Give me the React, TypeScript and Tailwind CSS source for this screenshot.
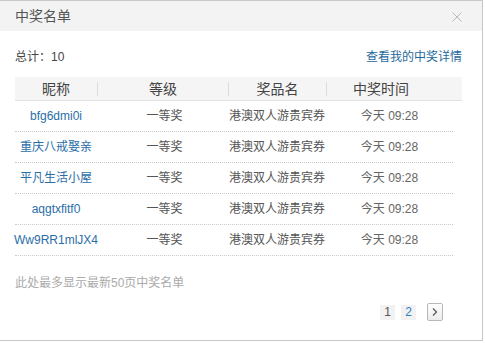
import React from "react";

type Winner = {
  name: string;
  level: string;
  prize: string;
  time: string;
};

const winners: Winner[] = [
  { name: "bfg6dmi0i", level: "一等奖", prize: "港澳双人游贵宾券", time: "今天 09:28" },
  { name: "重庆八戒娶亲", level: "一等奖", prize: "港澳双人游贵宾券", time: "今天 09:28" },
  { name: "平凡生活小屋", level: "一等奖", prize: "港澳双人游贵宾券", time: "今天 09:28" },
  { name: "aqgtxfitf0", level: "一等奖", prize: "港澳双人游贵宾券", time: "今天 09:28" },
  { name: "Ww9RR1mlJX4", level: "一等奖", prize: "港澳双人游贵宾券", time: "今天 09:28" },
];

const font = "font-['Liberation_Sans','Noto_Sans_CJK_SC',sans-serif]";

const Divider = () => <div className="h-[14px] w-px bg-[#dcdcdc]" />;

const App = () => {
  return (
    <div className={`w-[485px] h-[343px] bg-white ${font}`}>
      <div className="w-[483px] h-[341px] border-t border-r border-b border-[#c8c8c8] flex flex-col">
        {/* title bar */}
        <div className="h-[30px] bg-[#f3f3f3] flex items-center justify-between pl-[15px] pr-[20px]">
          <span className="text-[14px] leading-[16px] text-[#555]">中奖名单</span>
          <svg width="10" height="10" viewBox="0 0 10 10" className="mt-[1px]">
            <path d="M0.5 0.5 L9.5 9.5 M9.5 0.5 L0.5 9.5" stroke="#b8b8b8" strokeWidth="1" fill="none" />
          </svg>
        </div>

        <div className="px-[15px] flex flex-col">
          <div className="mt-[18px] h-[16px] flex items-center justify-between pr-[5px] text-[12px] leading-[16px]">
            <span className="text-[#444]">总计：10</span>
            <span className="text-[#1f6a9c]">查看我的中奖详情</span>
          </div>

          {/* table head */}
          <div className="mt-[12px] w-[447px] h-[24px] bg-[#f5f5f5] border-b border-[#e2e2e2] grid grid-cols-[82px_1px_130px_1px_97px_1px_135px] items-center text-[14px] leading-[16px] text-[#444] text-center">
            <span>昵称</span>
            <Divider />
            <span>等级</span>
            <Divider />
            <span>奖品名</span>
            <Divider />
            <span className="pr-[27px]">中奖时间</span>
          </div>

          {/* rows */}
          <div className="w-[438px] flex flex-col">
            {winners.map((w) => (
              <div
                key={w.name}
                className="h-[31px] border-b border-dotted border-[#c9c9c9] grid grid-cols-[82px_131px_98px_127px] items-center text-center text-[12px] leading-[16px]"
              >
                <span className="text-[#2a6ea8] whitespace-nowrap flex justify-center">{w.name}</span>
                <span className="text-[#555] pl-[4px]">{w.level}</span>
                <span className="text-[#555] whitespace-nowrap">{w.prize}</span>
                <span className="text-[#666] whitespace-nowrap">{w.time}</span>
              </div>
            ))}
          </div>

          <div className="mt-[19px] h-[16px] text-[12px] leading-[16px] text-[#aaa]">
            此处最多显示最新50页中奖名单
          </div>

          <div className="mt-[12px] flex items-center justify-end pr-[24px] gap-[6px] text-[12px]">
            <span className="w-[15px] h-[15px] bg-[#f2f2f2] text-[#555] flex items-center justify-center leading-none">1</span>
            <span className="w-[15px] h-[15px] bg-[#f2f2f2] text-[#2d7fc4] flex items-center justify-center leading-none">2</span>
            <span className="ml-[5px] w-[16px] h-[18px] border border-[#b8b8b8] rounded-[2px] bg-gradient-to-b from-white to-[#ececec] flex items-center justify-center">
              <svg width="6" height="8" viewBox="0 0 6 8">
                <path d="M1 0.5 L4.5 4 L1 7.5" stroke="#555" strokeWidth="1.2" fill="none" />
              </svg>
            </span>
          </div>
        </div>
      </div>
    </div>
  );
};

export default App;
